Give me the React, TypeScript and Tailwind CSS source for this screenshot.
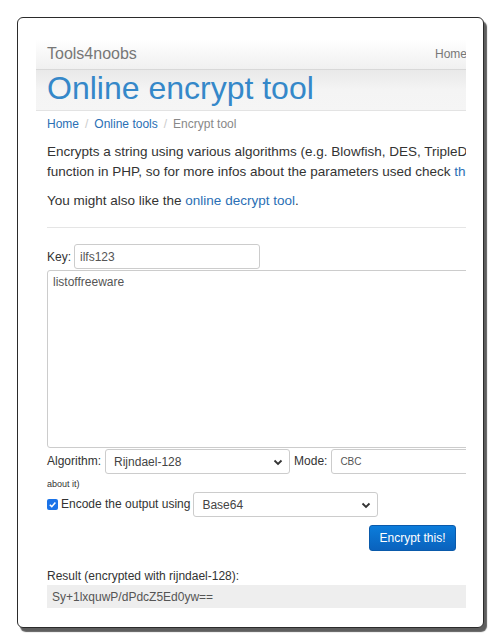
const font = { fontFamily: '"Liberation Sans", Arial, sans-serif' }

const Chevron = () => (
  <svg width="10" height="10" viewBox="0 0 10 10" className="shrink-0">
    <path d="M1.5 3.5 L5 7 L8.5 3.5" fill="none" stroke="#333" strokeWidth="1.8" />
  </svg>
)

const Select = ({ value, className }: { value: string; className: string }) => (
  <div
    className={`flex items-center justify-between rounded-[3px] border border-[#cccccc] bg-white pl-[8px] pr-[6px] text-[12px] text-[#444] ${className}`}
  >
    <span>{value}</span>
    <Chevron />
  </div>
)

export default function App() {
  return (
    <div className="h-[643px] w-[500px] bg-white pl-[17px] pt-[17px]" style={font}>
      <div className="h-[611px] w-[467px] overflow-hidden rounded-[6px] border border-[#2b2b2b] bg-white pl-[18px] pr-[17px] pt-[21px] shadow-[3px_4px_1px_rgba(40,40,40,0.75)]">
        <div className="w-[430px] overflow-hidden">
          <div className="w-[640px]">
            {/* navbar */}
            <div className="flex h-[31px] items-center border-b border-[#d8d8d8] bg-gradient-to-b from-white to-[#f0f0f0] pl-[11px]">
              <span className="w-[388px] text-[16px] text-[#777]">Tools4noobs</span>
              <span className="text-[12px] text-[#777]">Home</span>
            </div>

            {/* header */}
            <div className="h-[41px] border-b border-[#e3e3e3] bg-gradient-to-b from-[#e9e9e9] via-[#f4f4f4] to-[#f5f5f5] pl-[11px]">
              <h1 className="text-[32px] leading-[36px] text-[#3588c9]">Online encrypt tool</h1>
            </div>

            <div className="pl-[11px] text-[12px] text-[#333]">
              {/* breadcrumb */}
              <div className="mt-[5px] flex items-center gap-[6px] leading-[17px]">
                <span className="text-[#2a6fb5]">Home</span>
                <span className="text-[#ccc]">/</span>
                <span className="text-[#2a6fb5]">Online tools</span>
                <span className="text-[#ccc]">/</span>
                <span className="text-[#888]">Encrypt tool</span>
              </div>

              <p className="mt-[9px] whitespace-nowrap text-[13.5px] leading-[20px]">
                Encrypts a string using various algorithms (e.g. Blowfish, DES, TripleDES, Enigma). This tool uses the mcrypt_encrypt()
                <br />
                function in PHP, so for more infos about the parameters used check{" "}
                <span className="text-[#2a6fb5]">the manual</span>.
              </p>
              <p className="mt-[9px] text-[13.5px] leading-[20px]">
                You might also like the <span className="text-[#2a6fb5]">online decrypt tool</span>.
              </p>

              <hr className="mt-[16px] border-[#e5e5e5]" />

              {/* key */}
              <div className="mt-[16px] flex items-center gap-[3px]">
                <span>Key:</span>
                <div className="flex h-[25px] w-[186px] items-center rounded-[3px] border border-[#cccccc] px-[5px] text-[#555]">
                  ilfs123
                </div>
              </div>

              <div className="mt-[1px] h-[178px] w-[600px] rounded-[3px] border border-[#cccccc] px-[5px] pt-[2px] text-[#555]">
                listoffreeware
              </div>

              {/* algorithm */}
              <div className="mt-[1px] flex items-start gap-[4px]">
                <span className="pt-[3px]">Algorithm:</span>
                <Select value="Rijndael-128" className="h-[25px] w-[185px]" />
                <span className="pt-[3px]">Mode:</span>
                <div className="flex h-[25px] w-[200px] items-center rounded-[3px] border border-[#cccccc] px-[8px] text-[10px] text-[#555]">
                  CBC
                </div>
              </div>
              <div className="mt-[5px] text-[9px] leading-[10px] text-[#333]">about it)</div>

              {/* encode */}
              <div className="mt-[3px] flex items-start gap-[3px]">
                <div className="mt-[7px] flex h-[11px] w-[11px] items-center justify-center rounded-[2px] bg-[#1a73e8]">
                  <svg width="9" height="9" viewBox="0 0 10 10">
                    <path d="M2 5.2 L4.2 7.4 L8.2 2.8" fill="none" stroke="white" strokeWidth="1.7" />
                  </svg>
                </div>
                <span className="pt-[3px]">Encode the output using</span>
                <Select value="Base64" className="h-[25px] w-[185px]" />
              </div>

              <div className="mt-[8px] flex w-[409px] justify-end">
                <div className="flex h-[26px] w-[87px] items-center justify-center rounded-[3px] border border-[#0a5aab] bg-gradient-to-b from-[#0c7ddb] to-[#0a62bd] text-white">
                  Encrypt this!
                </div>
              </div>

              <div className="mt-[17px] leading-[17px]">Result (encrypted with rijndael-128):</div>
              <div className="flex h-[23px] w-[600px] items-center bg-[#eeeeee] px-[5px] text-[#555]">
                Sy+1lxquwP/dPdcZ5Ed0yw==
              </div>
            </div>
          </div>
        </div>
      </div>
    </div>
  )
}
